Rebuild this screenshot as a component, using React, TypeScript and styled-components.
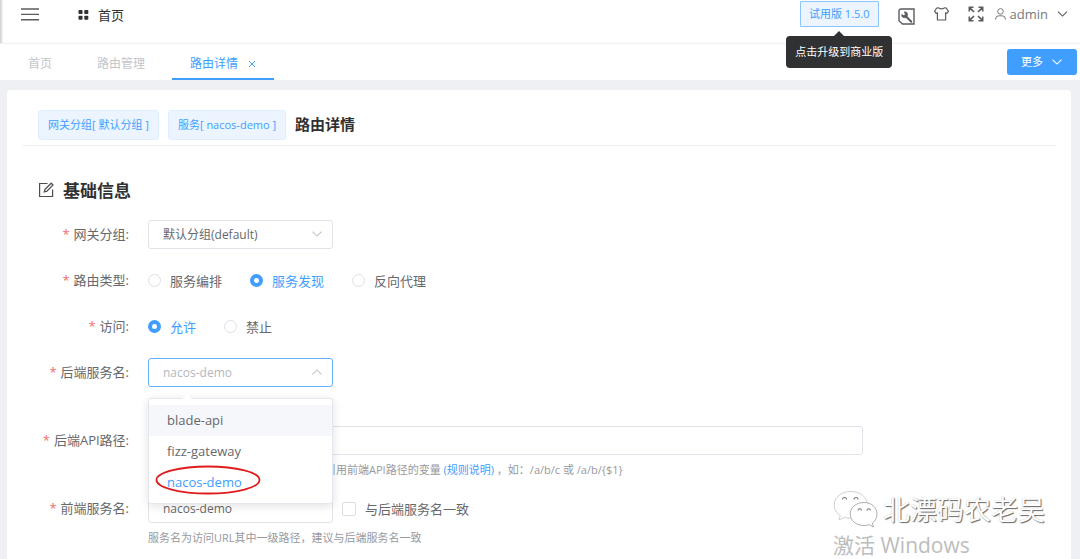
import React, { useState } from 'react';
import styled, { createGlobalStyle, css } from 'styled-components';

const blue = '#409eff';

const GlobalStyle = createGlobalStyle`
  *, *::before, *::after { box-sizing: border-box; }
  body {
    margin: 0;
    background: #eff0f4;
    color: #66686c;
    font: 13px/20px "Open Sans", "Noto Sans CJK SC", sans-serif;
    overflow: hidden;
  }
  button, input, select { font: inherit; color: inherit; margin: 0; }
  button { cursor: pointer; }
`;

const Page = styled.div`
  min-height: 100vh;
  display: flex;
  flex-direction: column;
  position: relative;
`;

const Header = styled.header`
  display: flex;
  justify-content: space-between;
  height: 44px;
  padding: 0 12px 0 20px;
  background: #fff;
  border-bottom: 1px solid #f2f2f4;
  box-shadow: inset 3px 0 2px -1px #d4d4d6;
`;

const HeaderGroup = styled.div<{ $gap: number }>`
  display: flex;
  align-items: center;
  height: 28px;
  gap: ${(p) => p.$gap}px;
`;

const IconButton = styled.button`
  display: flex;
  padding: 0;
  border: 0;
  background: none;
  color: #5a5c60;
`;

const HomeLink = styled.a`
  display: flex;
  align-items: center;
  gap: 9px;
  color: #303133;
  text-decoration: none;
  padding-top: 2px;
`;

const VersionWrap = styled.div`
  position: relative;
`;

const Version = styled.button`
  display: block;
  height: 26px;
  padding: 0 8px;
  font-size: 11px;
  line-height: 24px;
  color: ${blue};
  background: #ecf5ff;
  border: 1px solid #8cc5ff;
  border-radius: 1px;
  white-space: nowrap;
`;

const Tooltip = styled.div`
  position: absolute;
  z-index: 5;
  top: 35px;
  left: 50%;
  transform: translateX(-50%);
  padding: 6px 9px;
  border-radius: 4px;
  background: #303133;
  color: #fff;
  font-size: 11px;
  white-space: nowrap;
  &::before {
    content: '';
    position: absolute;
    top: -5px;
    left: 50%;
    margin-left: -5px;
    border: 5px solid transparent;
    border-top: 0;
    border-bottom-color: #303133;
  }
`;

const UserButton = styled.button`
  display: flex;
  align-items: center;
  gap: 4px;
  padding: 0;
  border: 0;
  background: none;
  color: #77797d;
`;

const TabBar = styled.nav`
  display: flex;
  justify-content: space-between;
  align-items: center;
  height: 36px;
  padding: 0 3px 0 10px;
  background: #fff;
`;

const Tabs = styled.div`
  display: flex;
  gap: 9px;
  height: 36px;
`;

const Tab = styled.a<{ $active?: boolean }>`
  display: flex;
  align-items: center;
  gap: 10px;
  padding: 6px 18px 0;
  font-size: 12px;
  text-decoration: none;
  color: ${(p) => (p.$active ? blue : '#c4c5c8')};
  border-bottom: 2px solid ${(p) => (p.$active ? blue : 'transparent')};
`;

const MoreButton = styled.button`
  display: flex;
  align-items: center;
  gap: 9px;
  height: 26px;
  padding: 0 15px 0 14px;
  border: 0;
  border-radius: 3px;
  background: ${blue};
  color: #fff;
  font-size: 11px;
`;

const Card = styled.main`
  flex: 1;
  margin: 10px 9px 0 7px;
  padding: 20px 15px 0;
  border-radius: 4px 4px 0 0;
  background: #fff;
`;

const TitleRow = styled.div`
  display: flex;
  gap: 9px;
  padding: 0 16px 5px;
  border-bottom: 1px solid #f0f1f4;
`;

const Tag = styled.span`
  height: 30px;
  padding: 0 9px;
  border: 1px solid #e0efff;
  border-radius: 3px;
  background: #ecf5ff;
  color: ${blue};
  font-size: 11px;
  line-height: 28px;
`;

const Title = styled.h1`
  margin: 0;
  font-size: 15px;
  line-height: 28px;
  font-weight: 700;
  color: #303133;
`;

const SectionTitle = styled.h2`
  display: flex;
  align-items: center;
  gap: 8px;
  margin: 32px 0 16px 16px;
  font-size: 17px;
  line-height: 26px;
  font-weight: 700;
  color: #303133;
`;

const Form = styled.form`
  display: flex;
  flex-direction: column;
  gap: 17px;
`;

const Row = styled.div`
  display: grid;
  grid-template-columns: 107px minmax(0, 1fr);
  column-gap: 19px;
`;

const labelText = css`
  line-height: 29px;
  text-align: right;
  white-space: nowrap;
  &::before {
    content: '*';
    margin-right: 4px;
    color: #f56c6c;
  }
`;

const Label = styled.label`${labelText}`;
const GroupLabel = styled.span`${labelText}`;

const Line = styled.div<{ $gap?: number }>`
  display: flex;
  align-items: center;
  gap: ${(p) => p.$gap || 0}px;
  height: 29px;
`;

const SelectBox = styled.div<{ $hintSpace?: boolean }>`
  position: relative;
  width: 185px;
  height: ${(p) => (p.$hintSpace ? 51 : 29)}px;
`;

const field = css`
  height: 29px;
  padding: 0 14px;
  font-size: 12px;
  border: 1px solid #e0e3e9;
  border-radius: 3px;
  background: #fff;
  outline: none;
`;

const Select = styled.select<{ $open?: boolean }>`
  ${field}
  width: 100%;
  appearance: none;
  ${(p) => p.$open && css`border-color: #66b1ff; color: #b4b8c0;`}
`;

const SelectArrow = styled.span`
  position: absolute;
  top: 11px;
  right: 11px;
  display: flex;
  color: #c0c4cc;
  pointer-events: none;
`;

const Input = styled.input<{ $wide?: boolean }>`
  ${field}
  width: ${(p) => (p.$wide ? '715px' : '185px')};
  max-width: 100%;
`;

const Menu = styled.ul`
  position: absolute;
  z-index: 4;
  top: 40px;
  left: 0;
  width: 100%;
  margin: 0;
  padding: 6px 0 5px;
  list-style: none;
  background: #fff;
  border: 1px solid #e4e7ed;
  border-radius: 3px;
  box-shadow: 0 2px 10px rgba(0, 0, 0, 0.12);
  &::before {
    content: '';
    position: absolute;
    top: -5px;
    left: 33px;
    border: 5px solid transparent;
    border-top: 0;
    border-bottom-color: #fff;
  }
`;

const Option = styled.li<{ $hover?: boolean; $selected?: boolean }>`
  position: relative;
  padding: 0 18px;
  line-height: 31px;
  cursor: pointer;
  background: ${(p) => (p.$hover ? '#f5f7fa' : 'transparent')};
  color: ${(p) => (p.$selected ? blue : 'inherit')};
`;

const Ring = styled.svg`
  position: absolute;
  top: -2px;
  left: 6px;
`;

const Choice = styled.label<{ $on?: boolean }>`
  display: flex;
  align-items: center;
  gap: 9px;
  color: ${(p) => (p.$on ? blue : 'inherit')};
  cursor: pointer;
`;

const Radio = styled.input`
  appearance: none;
  width: 13px;
  height: 13px;
  border: 1px solid #dcdfe6;
  border-radius: 50%;
  background: #fff;
  &:checked { border: 4px solid ${blue}; }
`;

const Checkbox = styled.input`
  appearance: none;
  width: 14px;
  height: 14px;
  border: 1px solid #dcdfe6;
  border-radius: 2px;
  background: #fff;
`;

const Hint = styled.p<{ $indent?: number }>`
  margin: 0;
  padding: 4px 0 0 ${(p) => p.$indent || 0}px;
  height: 22px;
  font-size: 11px;
  line-height: 22px;
  color: #97999e;
  white-space: nowrap;
  a { color: ${blue}; text-decoration: none; }
`;

const Watermark = styled.div`
  position: absolute;
  z-index: 6;
  right: 34px;
  bottom: 0;
  width: 213px;
  pointer-events: none;
`;

const Author = styled.div`
  display: flex;
  align-items: center;
  gap: 5px;
  font-size: 27px;
  line-height: 42px;
  color: #fff;
  white-space: nowrap;
  text-shadow: 1px 1px 1px #666, 0 0 1px #bbb;
`;

const Activate = styled.div`
  font-size: 21px;
  line-height: 28px;
  color: #bdbdbd;
`;

function Chevron({ up = false, size = 10 }: { up?: boolean; size?: number }) {
  return (
    <svg width={size} height="6" viewBox="0 0 10 6" fill="none" stroke="currentColor" strokeWidth="1.1">
      <path d={up ? 'M0.5 5.3 5 0.9l4.5 4.4' : 'M0.5 0.7 5 5.1 9.5 0.7'} />
    </svg>
  );
}

const MenuIcon = () => (
  <svg width="19" height="14" viewBox="0 0 19 14" stroke="#5a5c60" strokeWidth="1.4">
    <path d="M1 2h18M1 7.4h18M1 12.8h18" />
  </svg>
);

const GridIcon = () => (
  <svg width="11" height="10" viewBox="0 0 11 10" fill="#303133">
    <rect x="0.5" width="4" height="4" rx="0.8" />
    <rect x="6.3" width="4" height="4" rx="0.8" />
    <rect x="0.5" y="5.8" width="4" height="4" rx="0.8" />
    <rect x="6.3" y="5.8" width="4" height="4" rx="0.8" />
  </svg>
);

const WrenchIcon = () => (
  <svg width="17" height="21" viewBox="0 -4 17 21" fill="none" stroke="currentColor">
    <path d="M3 1h13v15H4.5L1 12.8V3a2 2 0 0 1 2-2Z" strokeWidth="1.4" />
    <path d="m8.3 8.7 5 5" strokeWidth="2" strokeLinecap="round" />
    <path d="M6.2 3.8a3 3 0 1 1-2.600 2.700l2.300 1.100 1.500-1.400Z" fill="currentColor" strokeWidth="0.6" />
  </svg>
);

const ShirtIcon = () => (
  <svg width="15" height="14" viewBox="0 0 15 14" fill="none" stroke="currentColor" strokeWidth="1.2" strokeLinejoin="round">
    <path d="M4.600 0.800C5.400 2.300 9.600 2.300 10.400 0.800L12.300 1 14.400 4.300 12.800 6.300 11.600 5.800V13H3.400V5.800L2.200 6.300 0.600 4.300 2.700 1Z" />
  </svg>
);

const ExpandIcon = () => (
  <svg width="16" height="16" viewBox="0 0 16 16" fill="none" stroke="currentColor" strokeWidth="1.6">
    <path d="M1.300 5.500V1.300h4.200M1.600 1.600l4.400 4.400M10.500 1.300h4.200v4.200M14.400 1.600 10 6M1.300 10.500v4.200h4.200M1.600 14.400 6 10M14.700 10.500v4.200h-4.200M14.400 14.400 10 10" />
  </svg>
);

const UserIcon = () => (
  <svg width="11" height="12" viewBox="0 0 11 12" fill="none" stroke="currentColor" strokeWidth="1">
    <circle cx="5.5" cy="3.4" r="2.8" />
    <path d="M0.600 11.600V11a3.200 3.200 0 0 1 3.200-3.200h3.400A3.200 3.200 0 0 1 10.400 11v.600" />
  </svg>
);

const EditIcon = () => (
  <svg width="17" height="18" viewBox="0 0 17 18" fill="none" stroke="#4a4c50" strokeWidth="1.2">
    <path d="M9.500 1.500H1.600v13h13V7.500" />
    <path d="m6.300 9.800.700-2.600L13.200 1.200l1.800 1.700-6.100 6.200Z" />
  </svg>
);

const ChatIcon = () => (
  <svg width="45" height="40" viewBox="0 0 45 40" fill="#fff" stroke="#c4c4c4" strokeWidth="0.8">
    <path d="M18 1.500C8.500 1.500 1.200 7.300 1.200 15c0 4.300 2.300 8 6 10.500L6 30l5.300-2.600c2.200.600 4.400.900 6.700.900 9.400 0 16.500-5.900 16.500-13.300S27.400 1.500 18 1.500Z" />
    <path stroke="#999" d="M31 12.500c-7.900 0-13.800 5-13.800 11.500S23.100 35.500 31 35.500c1.800 0 3.700-.300 5.300-.800l4.200 2.300-1.100-3.900c2.900-2.100 4.600-5.300 4.600-9.100 0-6.500-5.600-11.500-13-11.500Z" />
    <g fill="none" stroke="#777" strokeWidth="1.1">
      <path d="M9.500 9.500a2 2 0 0 1 4 0M21 9.500a2 2 0 0 1 4 0M25 20.500a1.700 1.700 0 0 1 3.400 0M34 20.500a1.700 1.700 0 0 1 3.400 0" />
    </g>
  </svg>
);

const services = ['blade-api', 'fizz-gateway', 'nacos-demo'];

function RadioRow({ label, name, options, initial }: { label: string; name: string; options: string[]; initial: string }) {
  const [value, setValue] = useState(initial);
  return (
    <Row role="radiogroup" aria-labelledby={`${name}-label`}>
      <GroupLabel id={`${name}-label`}>{label}:</GroupLabel>
      <Line $gap={28}>
        {options.map((o) => (
          <Choice key={o} $on={o === value}>
            <Radio type="radio" name={name} checked={o === value} onChange={() => setValue(o)} />
            {o}
          </Choice>
        ))}
      </Line>
    </Row>
  );
}

export default function App() {
  const [service, setService] = useState('nacos-demo');
  return (
    <>
      <GlobalStyle />
      <Page>
        <Header>
          <HeaderGroup $gap={39}>
            <IconButton aria-label="菜单"><MenuIcon /></IconButton>
            <HomeLink href="#home"><GridIcon />首页</HomeLink>
          </HeaderGroup>
          <HeaderGroup $gap={19}>
            <VersionWrap>
              <Version aria-describedby="upgrade-tip">试用版 1.5.0</Version>
              <Tooltip role="tooltip" id="upgrade-tip">点击升级到商业版</Tooltip>
            </VersionWrap>
            <IconButton aria-label="工具"><WrenchIcon /></IconButton>
            <IconButton aria-label="主题"><ShirtIcon /></IconButton>
            <HeaderGroup $gap={11}>
              <IconButton aria-label="全屏"><ExpandIcon /></IconButton>
              <HeaderGroup $gap={9}>
                <UserButton><UserIcon />admin</UserButton>
                <IconButton aria-label="用户菜单"><Chevron size={11} /></IconButton>
              </HeaderGroup>
            </HeaderGroup>
          </HeaderGroup>
        </Header>
        <TabBar>
          <Tabs>
            <Tab href="#home">首页</Tab>
            <Tab href="#routes">路由管理</Tab>
            <Tab href="#detail" $active>
              路由详情
              <svg width="8" height="8" viewBox="0 0 8 8" stroke="currentColor"><path d="m1 1 6 6M7 1 1 7" /></svg>
            </Tab>
          </Tabs>
          <MoreButton>更多<Chevron /></MoreButton>
        </TabBar>
        <Card>
          <TitleRow>
            <Tag>网关分组[ 默认分组 ]</Tag>
            <Tag>服务[ nacos-demo ]</Tag>
            <Title>路由详情</Title>
          </TitleRow>
          <SectionTitle><EditIcon />基础信息</SectionTitle>
          <Form onSubmit={(e) => e.preventDefault()}>
            <Row>
              <Label htmlFor="group">网关分组:</Label>
              <SelectBox>
                <Select id="group"><option>默认分组(default)</option></Select>
                <SelectArrow><Chevron /></SelectArrow>
              </SelectBox>
            </Row>
            <RadioRow label="路由类型" name="type" options={['服务编排', '服务发现', '反向代理']} initial="服务发现" />
            <RadioRow label="访问" name="access" options={['允许', '禁止']} initial="允许" />
            <Row>
              <Label htmlFor="backend">后端服务名:</Label>
              <SelectBox $hintSpace>
                <Select id="backend" $open value={service} onChange={(e) => setService(e.target.value)}>
                  {services.map((s) => <option key={s}>{s}</option>)}
                </Select>
                <SelectArrow><Chevron up /></SelectArrow>
                <Menu role="listbox" aria-label="后端服务名">
                  {services.map((s, i) => (
                    <Option key={s} role="option" aria-selected={s === service} $hover={i === 0} $selected={s === service} onClick={() => setService(s)}>
                      {s}
                      {i === 2 && (
                        <Ring width="106" height="30" viewBox="0 0 106 30" fill="none" stroke="#e01b1b" strokeWidth="1.8">
                          <ellipse cx="53" cy="15" rx="51.500" ry="13.500" />
                        </Ring>
                      )}
                    </Option>
                  ))}
                </Menu>
              </SelectBox>
            </Row>
            <Row>
              <Label htmlFor="path">后端API路径:</Label>
              <div>
                <Line><Input id="path" $wide /></Line>
                <Hint $indent={177}>引用前端API路径的变量 <a href="#rules">(规则说明)</a> ，如：/a/b/c 或 /a/b/{'{$1}'}</Hint>
              </div>
            </Row>
            <Row>
              <Label htmlFor="front">前端服务名:</Label>
              <div>
                <Line $gap={9}>
                  <Input id="front" defaultValue="nacos-demo" />
                  <Choice><Checkbox type="checkbox" />与后端服务名一致</Choice>
                </Line>
                <Hint>服务名为访问URL其中一级路径，建议与后端服务名一致</Hint>
              </div>
            </Row>
          </Form>
        </Card>
        <Watermark>
          <Author><ChatIcon />北漂码农老吴</Author>
          <Activate>激活 Windows</Activate>
        </Watermark>
      </Page>
    </>
  );
}
